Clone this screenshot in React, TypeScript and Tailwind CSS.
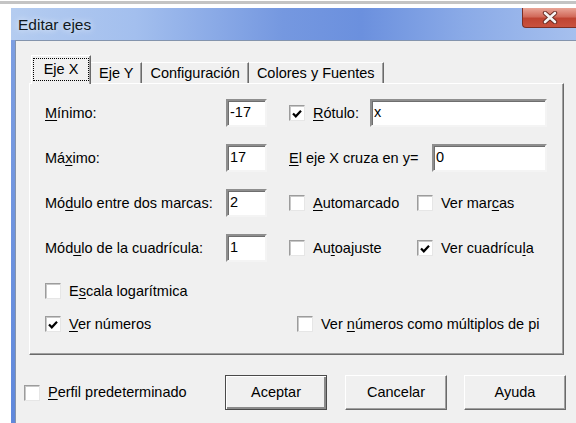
import React from 'react';

// Classic Win32 dialog pieces: sunken edit, checkbox, raised button, tabs.
const sans = "font-['Liberation_Sans',Arial,sans-serif]";

const Mn: React.FC<{ children: React.ReactNode }> = ({ children }) => (
  <span className="underline decoration-1 underline-offset-[2px]">{children}</span>
);

const Check: React.FC<{ checked?: boolean }> = ({ checked }) => (
  <div className="w-[16px] h-[16px] shrink-0 border border-t-[#9c9c9c] border-l-[#9c9c9c] border-r-[#e6e6e6] border-b-[#e6e6e6] bg-white shadow-[inset_1px_1px_0_#c8c8c8] flex items-center justify-center">
    {checked && (
      <svg width="10" height="9" viewBox="0 0 10 9">
        <path d="M1 4.5 L3.8 7.3 L9 1.8" fill="none" stroke="#000" strokeWidth="2.2" />
      </svg>
    )}
  </div>
);

const Edit: React.FC<{ value: string; width: string }> = ({ value, width }) => (
  <div
    className={`${width} h-[28px] shrink-0 bg-white border-2 border-t-[#8e8e8e] border-l-[#8e8e8e] border-r-[#f4f4f4] border-b-[#f4f4f4] shadow-[inset_1px_1px_0_#6e6e6e] flex items-center pl-[2px] text-[14.5px] text-black`}
  >
    {value}
  </div>
);

const Button: React.FC<{ label: string; isDefault?: boolean }> = ({ label, isDefault }) => (
  <div
    className={`w-[102px] h-[35px] flex items-center justify-center text-[14.5px] text-black bg-[#f0f0f0] border ${
      isDefault ? 'border-[#4a4a4a]' : 'border-t-white border-l-white border-r-[#6a6a6a] border-b-[#6a6a6a]'
    } ${
      isDefault
        ? 'shadow-[inset_1px_1px_0_#fff,inset_-2px_-2px_0_#8a8a8a]'
        : 'shadow-[inset_-1px_-1px_0_#a0a0a0]'
    }`}
  >
    {label}
  </div>
);

const Label: React.FC<{ children: React.ReactNode; className?: string }> = ({ children, className = '' }) => (
  <span className={`text-[14.5px] text-black whitespace-nowrap leading-none ${className}`}>{children}</span>
);

export default function App() {
  const tabs = ['Eje Y', 'Configuración', 'Colores y Fuentes'];

  return (
    <div className={`w-[576px] h-[423px] bg-white overflow-hidden flex flex-col ${sans}`}>
      {/* strip of the window behind */}
      <div className="h-[1px] shrink-0 bg-white" />
      <div className="h-[3px] shrink-0 bg-[#c4c4c4]" />
      <div className="h-[4px] shrink-0 bg-white" />

      <div className="ml-[11px] flex-1 flex flex-col bg-[linear-gradient(180deg,#7fa0e2_0%,#5f88dc_100%)]">
        {/* title bar */}
        <div className="h-[32px] shrink-0 flex items-start justify-between bg-[linear-gradient(90deg,#b4ccf0_0%,#a3bfee_22%,#7598e0_48%,#6b90de_62%,#8aaae7_80%,#a6c0ee_100%)]">
          <span className="ml-[7px] mt-[9px] text-[15.5px] leading-none text-[#101820] [text-shadow:0_0_6px_rgba(255,255,255,0.9)]">
            Editar ejes
          </span>
          <div className="w-[54px] h-[20px] rounded-bl-[4px] border border-t-0 border-r-0 border-[#7c2f25] bg-[linear-gradient(180deg,#e9a597_0%,#d26b5b_45%,#bf4432_55%,#c9523e_100%)] flex items-center justify-center">
            <svg width="16" height="13" viewBox="0 0 16 13">
              <path d="M3 2 L13 11 M13 2 L3 11" stroke="#6b2b22" strokeWidth="4.4" strokeLinecap="round" />
              <path d="M3 2 L13 11 M13 2 L3 11" stroke="#f4f4f4" strokeWidth="2.6" strokeLinecap="round" />
            </svg>
          </div>
        </div>

        {/* client area */}
        <div className="ml-[4px] flex-1 bg-[#f0f0f0] border-t border-l border-[#8494ad] flex flex-col">
          {/* tab strip */}
          <div className="ml-[15px] mt-[14px] h-[28px] flex items-end">
            <div className="relative z-10 -mb-px w-[60px] h-[29px] bg-[#f0f0f0] border-l border-t border-white border-r border-r-[#6a6a6a] shadow-[inset_-1px_0_0_#a0a0a0] flex pt-[2px] pl-[1px]">
              <div className="w-[56px] h-[23px] border border-dotted border-black flex items-center justify-center">
                <Label>Eje X</Label>
              </div>
            </div>
            {tabs.map(t => (
              <div
                key={t}
                className="h-[21px] px-[8px] bg-[#f0f0f0] border-t border-white border-r border-r-[#6a6a6a] shadow-[inset_-1px_0_0_#a0a0a0] flex items-center"
              >
                <Label>{t}</Label>
              </div>
            ))}
          </div>

          {/* tab page */}
          <div className="ml-[13px] w-[535px] h-[272px] shrink-0 border-l border-t border-white border-r border-b border-r-[#6a6a6a] border-b-[#6a6a6a] shadow-[inset_-1px_-1px_0_#a0a0a0] pl-[15px] pt-[15px] flex flex-col">
            <div className="flex flex-col gap-[17px]">
              <div className="h-[28px] flex items-center">
                <Label className="w-[181px]"><Mn>M</Mn>ínimo:</Label>
                <Edit value="-17" width="w-[41px]" />
                <div className="ml-[22px]"><Check checked /></div>
                <Label className="ml-[8px] w-[57px]"><Mn>R</Mn>ótulo:</Label>
                <Edit value="x" width="w-[177px]" />
              </div>
              <div className="h-[28px] flex items-center">
                <Label className="w-[181px]">Má<Mn>x</Mn>imo:</Label>
                <Edit value="17" width="w-[41px]" />
                <Label className="ml-[22px] w-[143px]"><Mn>E</Mn>l eje X cruza en y=</Label>
                <Edit value="0" width="w-[115px]" />
              </div>
              <div className="h-[28px] flex items-center">
                <Label className="w-[181px]">Mó<Mn>d</Mn>ulo entre dos marcas:</Label>
                <Edit value="2" width="w-[41px]" />
                <div className="ml-[22px]"><Check /></div>
                <Label className="ml-[8px] w-[104px]"><Mn>A</Mn>utomarcado</Label>
                <Check />
                <Label className="ml-[8px]">Ver mar<Mn>c</Mn>as</Label>
              </div>
              <div className="h-[28px] flex items-center">
                <Label className="w-[181px]">Mód<Mn>u</Mn>lo de la cuadrícula:</Label>
                <Edit value="1" width="w-[41px]" />
                <div className="ml-[22px]"><Check /></div>
                <Label className="ml-[8px] w-[104px]">Au<Mn>t</Mn>oajuste</Label>
                <Check checked />
                <Label className="ml-[8px]">Ver cuadrícu<Mn>l</Mn>a</Label>
              </div>
            </div>

            <div className="mt-[21px] h-[16px] flex items-center">
              <Check />
              <Label className="ml-[8px]">E<Mn>s</Mn>cala logarítmica</Label>
            </div>
            <div className="mt-[17px] h-[16px] flex items-center">
              <Check checked />
              <Label className="ml-[8px] w-[228px]"><Mn>V</Mn>er números</Label>
              <Check />
              <Label className="ml-[8px]">Ver <Mn>n</Mn>úmeros como múltiplos de pi</Label>
            </div>
          </div>

          {/* footer */}
          <div className="mt-[20px] h-[35px] flex items-center">
            <div className="ml-[8px]"><Check /></div>
            <Label className="ml-[8px] w-[177px]"><Mn>P</Mn>erfil predeterminado</Label>
            <Button label="Aceptar" isDefault />
            <div className="ml-[18px]"><Button label="Cancelar" /></div>
            <div className="ml-[17px]"><Button label="Ayuda" /></div>
          </div>
        </div>
      </div>
    </div>
  );
}
